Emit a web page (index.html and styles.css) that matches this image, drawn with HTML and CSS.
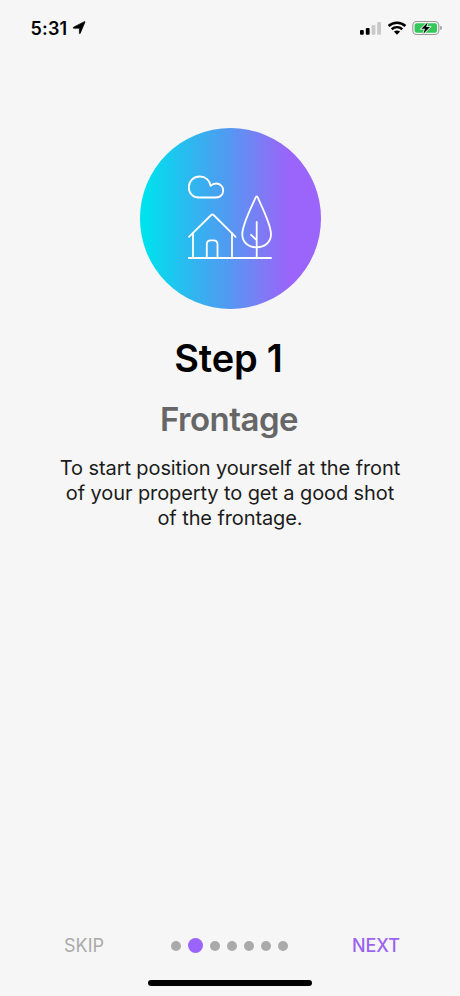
FILE: index.html
```html
<!DOCTYPE html>
<html lang="en">
<head>
    <meta charset="UTF-8">
    <meta name="viewport" content="width=device-width, initial-scale=1.0">
    <title>Step 1 - Frontage</title>
    <link rel="stylesheet" href="styles.css">
</head>
<body>
    <div class="screen">
        <header class="status-bar">
            <div class="status-left">
                <span class="time">5:31</span>
                <svg class="location" width="14" height="14" viewBox="0 0 14 14">
                    <path d="M13 1 L8.2 12.4 Q7.7 13 7.4 12.2 V7.2 H1.6 Q.7 6.8 1.5 6.2 L12.2 .8 Q13.2 .3 13 1 Z"/>
                </svg>
            </div>
            <div class="status-right">
                <svg class="signal" width="22" height="14" viewBox="0 0 22 14">
                    <rect x="0" y="8.9" width="3.8" height="4.9" rx="1"/>
                    <rect x="5.8" y="7" width="3.8" height="6.8" rx="1"/>
                    <rect class="off" x="11.6" y="4.1" width="3.8" height="9.7" rx="1"/>
                    <rect class="off" x="17.2" y=".9" width="3.8" height="12.9" rx="1"/>
                </svg>
                <svg class="wifi" width="20" height="14" viewBox="0 0 20 14">
                    <path class="wave" d="M1.6 5 C6.4 .6 13.6 .6 18.4 5"/>
                    <path class="wave" d="M4.7 8.2 C7.8 5.5 12.2 5.5 15.3 8.2"/>
                    <path d="M6.9 10.6 Q10 8.3 13.1 10.6 L10 13.7 Z"/>
                </svg>
                <svg class="battery" width="31" height="16" viewBox="0 0 31 16">
                    <rect class="shell" x=".8" y="1.5" width="26" height="13" rx="3.8"/>
                    <rect class="charge" x="2.6" y="3.3" width="22.4" height="9.4" rx="2"/>
                    <path class="cap" d="M28.2 5.8 Q30 6.4 30 8 Q30 9.6 28.2 10.2 Z"/>
                    <path class="bolt" d="M15.8 2.2 L9.4 8.8 H13 L11.4 13.8 L18 7.1 H14.2 Z"/>
                </svg>
            </div>
        </header>

        <main class="content">
            <div class="badge">
                <svg width="100" height="100" viewBox="0 0 100 100">
                    <path d="M18.8 32.5 C12.8 32.5 8.8 28 8.8 22.3 C8.8 16.1 13.6 11.5 19.7 11.5 C25.5 11.5 29.9 15.5 30.6 20.8 C32.2 19.2 34.1 18.5 36.2 18.5 C40.4 18.5 43.2 21.6 43.2 25.5 C43.2 29.5 40.2 32.5 36.2 32.5 Z"/>
                    <path d="M8.8 93 H91"/>
                    <path d="M9 71.8 L31.2 50 Q32.4 48.9 33.6 50 L55.6 71.8"/>
                    <path d="M13 68.2 V93 M52 68.2 V93"/>
                    <path d="M26.8 93 V79.2 Q26.8 75.3 30.7 75.3 H33.6 Q37.5 75.3 37.5 79.2 V93"/>
                    <path d="M75.8 32.2 Q76.7 30.8 77.6 32.2 C82.6 43.5 91 59.5 91 69.2 C91 77.2 84.8 82.3 76.5 82.3 C68.2 82.3 62.3 77.2 62.3 69.2 C62.3 59.5 70.8 43.5 75.8 32.2 Z"/>
                    <path d="M76.7 56.8 V93 M71 69.8 L76.7 75.2"/>
                </svg>
            </div>
            <h1>Step 1</h1>
            <h2>Frontage</h2>
            <p>To start position yourself at the front<br>of your property to get a good shot<br>of the frontage.</p>
        </main>

        <footer class="controls">
            <button type="button" class="skip">SKIP</button>
            <div class="dots">
                <span class="dot"></span>
                <span class="dot active"></span>
                <span class="dot"></span>
                <span class="dot"></span>
                <span class="dot"></span>
                <span class="dot"></span>
                <span class="dot"></span>
            </div>
            <button type="button" class="next">NEXT</button>
        </footer>
        <div class="home-indicator"></div>
    </div>
</body>
</html>
```
FILE: styles.css
```css
body {
    margin: 0;
    background-color: #f6f6f6;
    color: #000;
    font-family: Inter, "Liberation Sans", sans-serif;
}

.screen {
    display: flex;
    flex-direction: column;
    box-sizing: border-box;
    width: 460px;
    height: 996px;
    padding-bottom: 10px;
    overflow: hidden;
}

.status-bar {
    display: flex;
    justify-content: space-between;
    align-items: center;
    height: 56px;
    padding: 0 17px 0 30.5px;
}

.status-left,
.status-right {
    display: flex;
    align-items: center;
}

.time {
    width: 41px;
    font-size: 18px;
    font-weight: 600;
    letter-spacing: 0.2px;
    white-space: nowrap;
}

.location {
    stroke: #000;
    stroke-width: 0.7;
}

.signal .off {
    fill: #c9c9c9;
}

.wifi {
    margin: 0 5px;
}

.wifi .wave {
    fill: none;
    stroke: #000;
    stroke-width: 2.5;
}

.battery .shell {
    fill: none;
    stroke: #999;
    stroke-width: 1.1;
}

.battery .charge {
    fill: #34c759;
}

.battery .cap {
    fill: #999;
}

.battery .bolt {
    stroke: #f6f6f6;
    stroke-width: 1.6;
    paint-order: stroke;
}

.content {
    display: flex;
    flex: 1;
    flex-direction: column;
    align-items: center;
    padding-top: 72px;
    text-align: center;
}

.badge {
    display: flex;
    align-items: center;
    justify-content: center;
    box-sizing: border-box;
    width: 181px;
    height: 181px;
    padding-bottom: 7px;
    border-radius: 50%;
    background: linear-gradient(90deg, #00e1ee 3%, #2cb9ef 27%, #4f9cf1 47%, #7d7bf5 67%, #9b64fa 83%);
}

.badge svg {
    fill: none;
    stroke: #fff;
    stroke-width: 1.8;
    stroke-linecap: round;
    stroke-linejoin: round;
}

h1 {
    margin: 25px 0 0;
    padding-right: 3px;
    font-size: 38px;
    font-weight: 600;
    line-height: 48px;
    letter-spacing: -0.2px;
}

h2 {
    margin: 15px 0 0;
    padding-right: 2px;
    color: #666;
    font-size: 33px;
    font-weight: 600;
    line-height: 44px;
    letter-spacing: -0.5px;
}

p {
    margin: 15px 0 0;
    color: #1c1c1c;
    font-size: 20px;
    line-height: 25px;
    letter-spacing: -0.1px;
    white-space: nowrap;
}

.controls {
    display: grid;
    grid-template-columns: 106.5px 1fr 108px;
    align-items: center;
    height: 24px;
    margin-bottom: 22px;
    padding: 0 60px 0 64px;
}

button {
    padding: 0;
    border: none;
    background: none;
    font-family: inherit;
    font-size: 18px;
    line-height: 24px;
    cursor: pointer;
}

.skip {
    color: #aaa;
    text-align: left;
}

.next {
    color: #9b64ee;
    font-weight: 500;
    text-align: right;
}

.dots {
    display: flex;
    align-items: center;
    gap: 7.1px;
    padding-bottom: 1px;
}

.dot {
    flex: none;
    width: 10px;
    height: 10px;
    border-radius: 50%;
    background-color: #aaa;
}

.dot.active {
    width: 15px;
    height: 15px;
    background-color: #9b64fa;
}

.home-indicator {
    width: 164px;
    height: 6px;
    margin: 0 auto;
    border-radius: 3px;
    background-color: #000;
}
```
